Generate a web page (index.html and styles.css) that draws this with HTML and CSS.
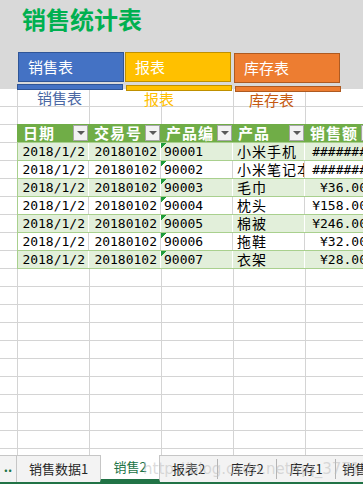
FILE: index.html
```html
<!DOCTYPE html>
<html lang="zh-CN">
<head>
	<meta charset="UTF-8">
	<title>销售统计表</title>
	<link rel="stylesheet" href="styles.css">
</head>
<body>
	<div class="sheet">
		<div class="banner">
			<h1 class="title">销售统计表</h1>
			<div class="groups">
				<div class="group g_sales">
					<div class="btn">销售表</div>
					<div class="bar"></div>
					<div class="label">销售表</div>
				</div>
				<div class="group g_report">
					<div class="btn">报表</div>
					<div class="bar"></div>
					<div class="label">报表</div>
				</div>
				<div class="group g_stock">
					<div class="btn">库存表</div>
					<div class="bar"></div>
					<div class="label">库存表</div>
				</div>
			</div>
		</div>

		<div class="table">
			<div class="row head">
				<div class="cell">日期<span class="filter"></span></div>
				<div class="cell">交易号<span class="filter"></span></div>
				<div class="cell">产品编<span class="filter"></span></div>
				<div class="cell">产品<span class="filter"></span></div>
				<div class="cell">销售额<span class="filter"></span></div>
			</div>
			<div class="row alt">
				<div class="cell num">2018/1/2</div>
				<div class="cell num">20180102</div>
				<div class="cell code">90001</div>
				<div class="cell name">小米手机</div>
				<div class="cell money">#######</div>
			</div>
			<div class="row">
				<div class="cell num">2018/1/2</div>
				<div class="cell num">20180102</div>
				<div class="cell code">90002</div>
				<div class="cell name">小米笔记本</div>
				<div class="cell money">#######</div>
			</div>
			<div class="row alt">
				<div class="cell num">2018/1/2</div>
				<div class="cell num">20180102</div>
				<div class="cell code">90003</div>
				<div class="cell name">毛巾</div>
				<div class="cell money">¥36.00</div>
			</div>
			<div class="row">
				<div class="cell num">2018/1/2</div>
				<div class="cell num">20180102</div>
				<div class="cell code">90004</div>
				<div class="cell name">枕头</div>
				<div class="cell money">¥158.00</div>
			</div>
			<div class="row alt">
				<div class="cell num">2018/1/2</div>
				<div class="cell num">20180102</div>
				<div class="cell code">90005</div>
				<div class="cell name">棉被</div>
				<div class="cell money">¥246.00</div>
			</div>
			<div class="row">
				<div class="cell num">2018/1/2</div>
				<div class="cell num">20180102</div>
				<div class="cell code">90006</div>
				<div class="cell name">拖鞋</div>
				<div class="cell money">¥32.00</div>
			</div>
			<div class="row alt">
				<div class="cell num">2018/1/2</div>
				<div class="cell num">20180102</div>
				<div class="cell code">90007</div>
				<div class="cell name">衣架</div>
				<div class="cell money">¥28.00</div>
			</div>
		</div>
	</div>

	<div class="tabs">
		<div class="tab more">..</div>
		<div class="tab t_data">销售数据1</div>
		<div class="tab active">销售2</div>
		<div class="tab t_mid">报表2</div>
		<div class="tab t_mid">库存2</div>
		<div class="tab t_mid">库存1</div>
		<div class="tab t_last">销售</div>
		<div class="mark">http://blog.csdn.net/qq_37712</div>
	</div>
</body>
</html>
```

FILE: styles.css
```css
body{
	margin:0;
	width:363px;
	height:484px;
	overflow:hidden;
	font-family:"Noto Sans CJK SC",sans-serif;
	background:#fff;
}
.sheet{
	height:455px;
	overflow:hidden;
	background-image:
		linear-gradient(to right,#d4d4d4 1px,transparent 1px),
		linear-gradient(to bottom,#d4d4d4 1px,transparent 1px);
	background-size:72px 100%,100% 18px;
	background-position:17px 0,0 16px;
}

/* 顶部灰色区域 */
.banner{
	height:89px;
	box-sizing:border-box;
	padding-top:4px;
	background:#d9d9d9;
}
.title{
	margin:0 0 0 22px;
	font-size:24px;
	line-height:30px;
	font-weight:bold;
	color:#00b050;
}
.groups{
	display:flex;
	padding-left:17px;
	margin-top:18px;
}
.group{
	display:flex;
	flex-direction:column;
	width:107px;
	flex:none;
}
.btn{
	width:106px;
	height:30px;
	box-sizing:border-box;
	border:1px solid;
	padding-left:9px;
	font-size:15px;
	line-height:28px;
	color:#fff;
}
.bar{
	width:106px;
	height:6px;
	box-sizing:border-box;
	border:1px solid;
}
.label{
	font-size:15px;
	line-height:16px;
	padding-left:20px;
}
.g_sales .btn{margin-left:1px;}
.g_sales .btn,.g_sales .bar{
	background:#4472c4;
	border-color:#2f5597;
}
.g_sales .bar{margin-top:2px;}
.g_sales .label{color:#4a67a3;}

.g_report .btn{margin-left:1px;}
.g_report .btn,.g_report .bar{
	background:#ffc000;
	border-color:#bf9000;
}
.g_report .bar{margin:3px 0 0 2px;}
.g_report .label{color:#ffc000;}

.g_stock{width:112px;}
.g_stock .btn{margin:1px 0 0 3px;}
.g_stock .btn,.g_stock .bar{
	background:#ed7d31;
	border-color:#ae5a21;
}
.g_stock .bar{margin:3px 0 0 4px;}
.g_stock .label{color:#c55a11;padding-left:18px;}

/* 表格 */
.table{
	margin:35px 0 0 17px;
	width:360px;
	border-bottom:1px solid #a9d08e;
}
.row{
	display:flex;
	height:18px;
	box-sizing:border-box;
	border-top:1px solid #a9d08e;
	background:#fff;
}
.row.alt{
	background:#e2efda;
}
.cell{
	width:72px;
	flex:none;
	box-sizing:border-box;
	border-right:1px solid #d4d4d4;
	overflow:hidden;
	white-space:nowrap;
	font-size:15px;
	line-height:17px;
	color:#000;
}
.row.alt .cell{
	border-right-color:#fff;
}
.row .cell:first-child{
	border-left:1px solid #a9d08e;
}
.row.head{
	border-top:none;
	background:#70ad47;
}
.head .cell{
	display:flex;
	align-items:center;
	justify-content:space-between;
	padding:0 1px 0 5px;
	border-right:none;
	color:#fff;
	font-weight:bold;
	letter-spacing:1px;
	line-height:18px;
}
.head .cell:first-child{
	border-left-color:#70ad47;
}
.filter{
	width:15px;
	height:16px;
	flex:none;
	box-sizing:border-box;
	border:1px solid #a6a6a6;
	background:#f2f2f2;
	display:flex;
	align-items:center;
	justify-content:center;
}
.filter:after{
	content:"";
	border-left:4px solid transparent;
	border-right:4px solid transparent;
	border-top:4px solid #595959;
}
.num,.code,.money{
	font-family:"DejaVu Sans Mono",monospace;
	font-size:13px;
}
.num{
	text-align:right;
	padding-right:3px;
}
.code{
	padding-left:3px;
	background:linear-gradient(135deg,#1e9c3a 4px,transparent 4px) no-repeat 0 0/6px 6px;
}
.name{
	padding-left:4px;
	font-size:14px;
	letter-spacing:1px;
	line-height:16px;
}
.money{
	text-align:right;
	padding-right:9px;
}

/* 工作表标签 */
.tabs{
	position:relative;
	display:flex;
	align-items:center;
	height:29px;
	box-sizing:border-box;
	border-top:1px solid #c6c6c6;
	border-bottom:2px solid #217346;
	background:#f3f3f3;
	font-size:13px;
	color:#262626;
}
.tab{
	flex:none;
	height:20px;
	line-height:20px;
	text-align:center;
	border-right:1px solid #b4b4b4;
}
.tab.more{
	width:17px;
	height:26px;
	color:#217346;
	font-weight:bold;
	line-height:22px;
	border-right-color:#c6c6c6;
	box-sizing:border-box;
}
.t_data{
	width:83px;
	border-right:none;
}
.tab.active{
	width:60px;
	height:27px;
	margin-top:-1px;
	box-sizing:border-box;
	background:#fff;
	border-left:1px solid #c6c6c6;
	border-right:1px solid #c6c6c6;
	border-bottom:3px solid #217346;
	color:#217346;
	line-height:24px;
}
.t_mid{
	width:57px;
}
.t_mid:nth-of-type(5),.t_mid:nth-of-type(6){
	width:58px;
}
.t_last{
	width:40px;
	border-right:none;
	padding-left:6px;
	text-align:left;
}
.mark{
	position:absolute;
	left:143px;
	top:4px;
	font-family:"DejaVu Sans",sans-serif;
	font-size:15px;
	color:rgba(190,190,190,.55);
	pointer-events:none;
	white-space:nowrap;
}
```
